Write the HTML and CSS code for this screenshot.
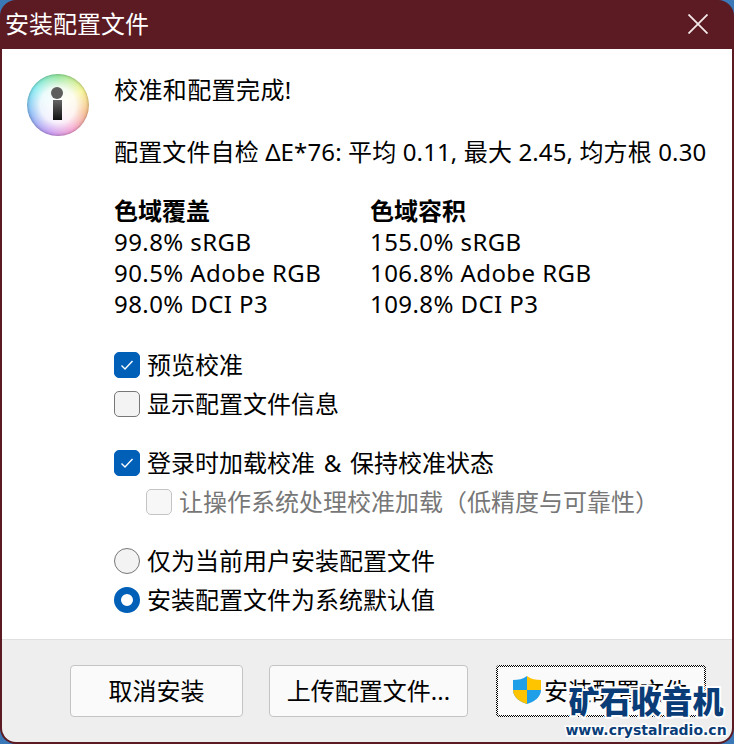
FILE: index.html
```html
<!DOCTYPE html>
<html lang="zh-CN">
<head>
    <meta charset="UTF-8">
    <title>安装配置文件</title>
    <link rel="stylesheet" href="styles.css">
</head>
<body>
    <div class="dialog">
        <div class="titlebar">
            <span class="title">安装配置文件</span>
            <svg class="close" width="20" height="20" viewBox="0 0 20 20">
                <path d="M0.5 0.5 L19.5 19.5 M19.5 0.5 L0.5 19.5" stroke="#f3eaea" stroke-width="1.8" fill="none"/>
            </svg>
        </div>

        <div class="content">
            <div class="info-icon"><span class="info-dot"></span><span class="info-bar"></span></div>

            <div class="main">
                <p class="line done">校准和配置完成!</p>
                <p class="line selfcheck">配置文件自检 ΔE*76: 平均 0.11, 最大 2.45, 均方根 0.30</p>

                <div class="gamut">
                    <div class="gamut-col">
                        <b>色域覆盖</b>
                        <span>99.8% sRGB</span>
                        <span>90.5% Adobe RGB</span>
                        <span>98.0% DCI P3</span>
                    </div>
                    <div class="gamut-col">
                        <b>色域容积</b>
                        <span>155.0% sRGB</span>
                        <span>106.8% Adobe RGB</span>
                        <span>109.8% DCI P3</span>
                    </div>
                </div>

                <div class="options first">
                    <div class="option"><span class="check on"><svg width="14" height="12" viewBox="0 0 14 12"><path d="M1.5 6.5 L5 10 L12.5 2" stroke="#fff" stroke-width="1.4" fill="none"/></svg></span>预览校准</div>
                    <div class="option"><span class="check"></span>显示配置文件信息</div>
                </div>

                <div class="options second">
                    <div class="option"><span class="check on"><svg width="14" height="12" viewBox="0 0 14 12"><path d="M1.5 6.5 L5 10 L12.5 2" stroke="#fff" stroke-width="1.4" fill="none"/></svg></span><span class="wide-words">登录时加载校准 &amp; 保持校准状态</span></div>
                    <div class="option sub disabled"><span class="check"></span>让操作系统处理校准加载（低精度与可靠性）</div>
                </div>

                <div class="options third">
                    <div class="option"><span class="radio"></span>仅为当前用户安装配置文件</div>
                    <div class="option"><span class="radio on"></span>安装配置文件为系统默认值</div>
                </div>
            </div>
        </div>

        <div class="footer">
            <button class="btn cancel">取消安装</button>
            <button class="btn upload">上传配置文件...</button>
            <button class="btn install">
                <svg class="shield" width="30" height="30" viewBox="0 0 30 30">
                    <path d="M15 1 C11 4 6 5 1 5 V15 C1 22 8 27 15 29 Z" fill="#1f9fe8"/>
                    <path d="M15 1 C19 4 24 5 29 5 V15 H15 Z" fill="#ffc400"/>
                    <path d="M15 15 H29 C29 22 22 27 15 29 Z" fill="#1f9fe8"/>
                    <path d="M1 15 H15 V29 C8 27 1 22 1 15 Z" fill="#ffc400"/>
                </svg>安装配置文件
            </button>
        </div>

        <div class="watermark">
            <div class="wm-name">矿石收音机</div>
            <div class="wm-url">www.crystalradio.cn</div>
        </div>
    </div>
</body>
</html>
```

FILE: styles.css
```css
* {
    box-sizing: border-box;
}

html, body {
    margin: 0;
    padding: 0;
}

body {
    width: 734px;
    height: 744px;
    background: #3a78b8;
    overflow: hidden;
    font-family: "Noto Sans", "Noto Sans CJK SC", sans-serif;
    font-size: 24px;
    color: #000;
}

.dialog {
    position: relative;
    width: 734px;
    height: 744px;
    display: flex;
    flex-direction: column;
    background: #5c1a22;
    border-radius: 16px;
    padding: 0 2px 2px 2px;
    overflow: hidden;
}

.titlebar {
    height: 49px;
    flex: none;
    display: flex;
    align-items: center;
    justify-content: space-between;
    padding: 0 24px 2px 3px;
    color: #fff;
}

.title {
    line-height: 30px;
}

.content {
    flex: 1;
    display: flex;
    background: #fff;
    padding: 25px 0 0 25px;
}

.info-icon {
    position: relative;
    flex: none;
    width: 62px;
    height: 62px;
    border-radius: 50%;
    background:
        radial-gradient(circle, rgba(255,255,255,1) 0%, rgba(255,255,255,0.9) 40%, rgba(255,255,255,0.25) 72%),
        conic-gradient(#58d868 0deg, #f2ee58 60deg, #f09850 105deg, #ee70b8 150deg, #a860e8 195deg, #4c90f0 250deg, #40e0e8 305deg, #58d868 360deg);
    box-shadow: inset 0 0 3px rgba(60,60,60,0.55);
}

.info-dot {
    position: absolute;
    left: 24px;
    top: 13px;
    width: 12px;
    height: 12px;
    border-radius: 50%;
    background: #5e5e5e;
}

.info-bar {
    position: absolute;
    left: 26px;
    top: 26px;
    width: 9px;
    height: 20px;
    background: linear-gradient(#666, #111);
}

.main {
    margin-left: 25px;
}

.line {
    margin: 0;
    line-height: 32px;
}

.done {
    letter-spacing: 0.4px;
}

.selfcheck {
    margin-top: 30px;
    letter-spacing: 0.13px;
}

.gamut {
    display: flex;
    margin-top: 27px;
}

.gamut-col {
    display: flex;
    flex-direction: column;
    width: 256px;
    line-height: 31px;
}

.gamut-col span {
    letter-spacing: 0.42px;
}

.options {
    display: flex;
    flex-direction: column;
    gap: 7px;
}

.options.first {
    margin-top: 30px;
}

.options.second {
    margin-top: 27px;
}

.options.third {
    margin-top: 27px;
}

.option {
    display: flex;
    align-items: center;
    gap: 7px;
    line-height: 32px;
}

.wide-words {
    word-spacing: 2.5px;
}

.option.sub {
    margin-left: 32px;
}

.option.disabled {
    color: #777;
}

.check {
    flex: none;
    width: 26px;
    height: 26px;
    display: flex;
    align-items: center;
    justify-content: center;
    border: 1px solid #777;
    border-radius: 5px;
    background: #f3f3f3;
}

.check.on {
    border-color: #0060b8;
    background: #0060b8;
}

.disabled .check {
    border-color: #c4c4c4;
    background: #f7f7f7;
}

.radio {
    flex: none;
    width: 26px;
    height: 26px;
    border: 1px solid #777;
    border-radius: 50%;
    background: #f3f3f3;
}

.radio.on {
    border: 7px solid #0060b8;
    background: #fff;
}

.footer {
    flex: none;
    height: 103px;
    display: flex;
    align-items: flex-start;
    padding: 25px 0 0 68px;
    background: #eee;
    border-top: 1px solid #e0e0e0;
    border-radius: 0 0 14px 14px;
}

.btn {
    position: relative;
    height: 52px;
    display: flex;
    align-items: center;
    justify-content: center;
    font: inherit;
    color: #000;
    background: #fafafa;
    border: 1px solid #c4c4c4;
    border-radius: 4px;
    padding: 0 0 3px 0;
}

.cancel {
    width: 173px;
}

.upload {
    width: 199px;
    margin-left: 26px;
}

.install {
    width: 210px;
    margin-left: 28px;
    padding-right: 2px;
}

/* focus ring, the fine checker of a native button */
.install::after {
    content: "";
    position: absolute;
    inset: -1px;
    padding: 2px;
    border-radius: 3px;
    background: repeating-conic-gradient(#000 0 25%, #fff 0 50%) 0 0 / 2px 2px;
    -webkit-mask: linear-gradient(#000 0 0) content-box exclude, linear-gradient(#000 0 0);
    mask: linear-gradient(#000 0 0) content-box exclude, linear-gradient(#000 0 0);
}

.shield {
    margin-right: 2px;
}

.shield + * {
    margin: 0;
}

.watermark {
    position: absolute;
    left: 568px;
    top: 680px;
    width: 156px;
    display: flex;
    flex-direction: column;
    align-items: center;
}

.wm-name {
    font-family: "Noto Sans CJK SC", sans-serif;
    font-size: 31px;
    font-weight: 900;
    line-height: 40px;
    color: #0a3d78;
    -webkit-text-stroke: 4px #fff;
    paint-order: stroke fill;
    white-space: nowrap;
}

.wm-url {
    font-family: "DejaVu Sans", sans-serif;
    font-size: 14px;
    font-weight: 700;
    line-height: 21px;
    color: #0a3d78;
    -webkit-text-stroke: 3px #fff;
    paint-order: stroke fill;
    white-space: nowrap;
}
```
